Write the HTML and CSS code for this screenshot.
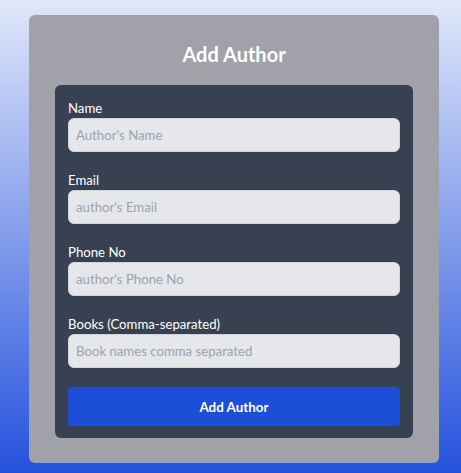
FILE: index.html
```html
<!DOCTYPE html>
<html lang="en">
<head>
<meta charset="utf-8">
<title>Add Author</title>
<link rel="stylesheet" href="styles.css">
</head>
<body>
<main class="page">
  <section class="card">
    <h1 class="title">Add Author</h1>
    <form class="panel">
      <div class="field">
        <label class="label" for="name">Name</label>
        <input class="input" id="name" type="text" placeholder="Author's Name">
      </div>
      <div class="field">
        <label class="label" for="email">Email</label>
        <input class="input" id="email" type="text" placeholder="author's Email">
      </div>
      <div class="field">
        <label class="label" for="phone">Phone No</label>
        <input class="input" id="phone" type="text" placeholder="author's Phone No">
      </div>
      <div class="field">
        <label class="label" for="books">Books (Comma-separated)</label>
        <input class="input" id="books" type="text" placeholder="Book names comma separated">
      </div>
      <button class="btn" type="button">Add Author</button>
    </form>
  </section>
</main>
</body>
</html>
```
FILE: styles.css
```css
* { box-sizing: border-box; }
html, body { margin: 0; padding: 0; }
body {
  font-family: Lato, "Segoe UI", sans-serif;
  background: linear-gradient(to bottom, #e0e7fa 0%, #2552dd 100%);
  min-height: 473px;
}
.page {
  padding: 15px 22px 10px 29px;
}
.card {
  width: 410px;
  height: 448px;
  background: #a1a1aa;
  border-radius: 6px;
  padding: 25px 26px 0 26px;
}
.title {
  margin: 0;
  text-align: center;
  color: #ffffff;
  font-size: 20px;
  line-height: 28px;
  font-weight: 700;
}
.panel {
  margin-top: 17px;
  background: #374151;
  border-radius: 6px;
  padding: 14px 13px 12px 13px;
  display: flex;
  flex-direction: column;
}
.field {
  display: flex;
  flex-direction: column;
  margin-bottom: 19px;
}
.label {
  color: #ffffff;
  font-size: 13.2px;
  line-height: 19px;
}
.input {
  height: 34px;
  border: 1px solid #d1d5db;
  border-radius: 6px;
  background: #e5e7eb;
  padding: 0 7px;
  font-family: inherit;
  font-size: 13.2px;
  color: #111827;
  outline: none;
}
.input::placeholder { color: #9ca3af; }
.btn {
  height: 39px;
  border: 0;
  border-radius: 4px;
  background: #1d4ed8;
  color: #ffffff;
  font-family: inherit;
  font-size: 13.4px;
  font-weight: 700;
}
```
